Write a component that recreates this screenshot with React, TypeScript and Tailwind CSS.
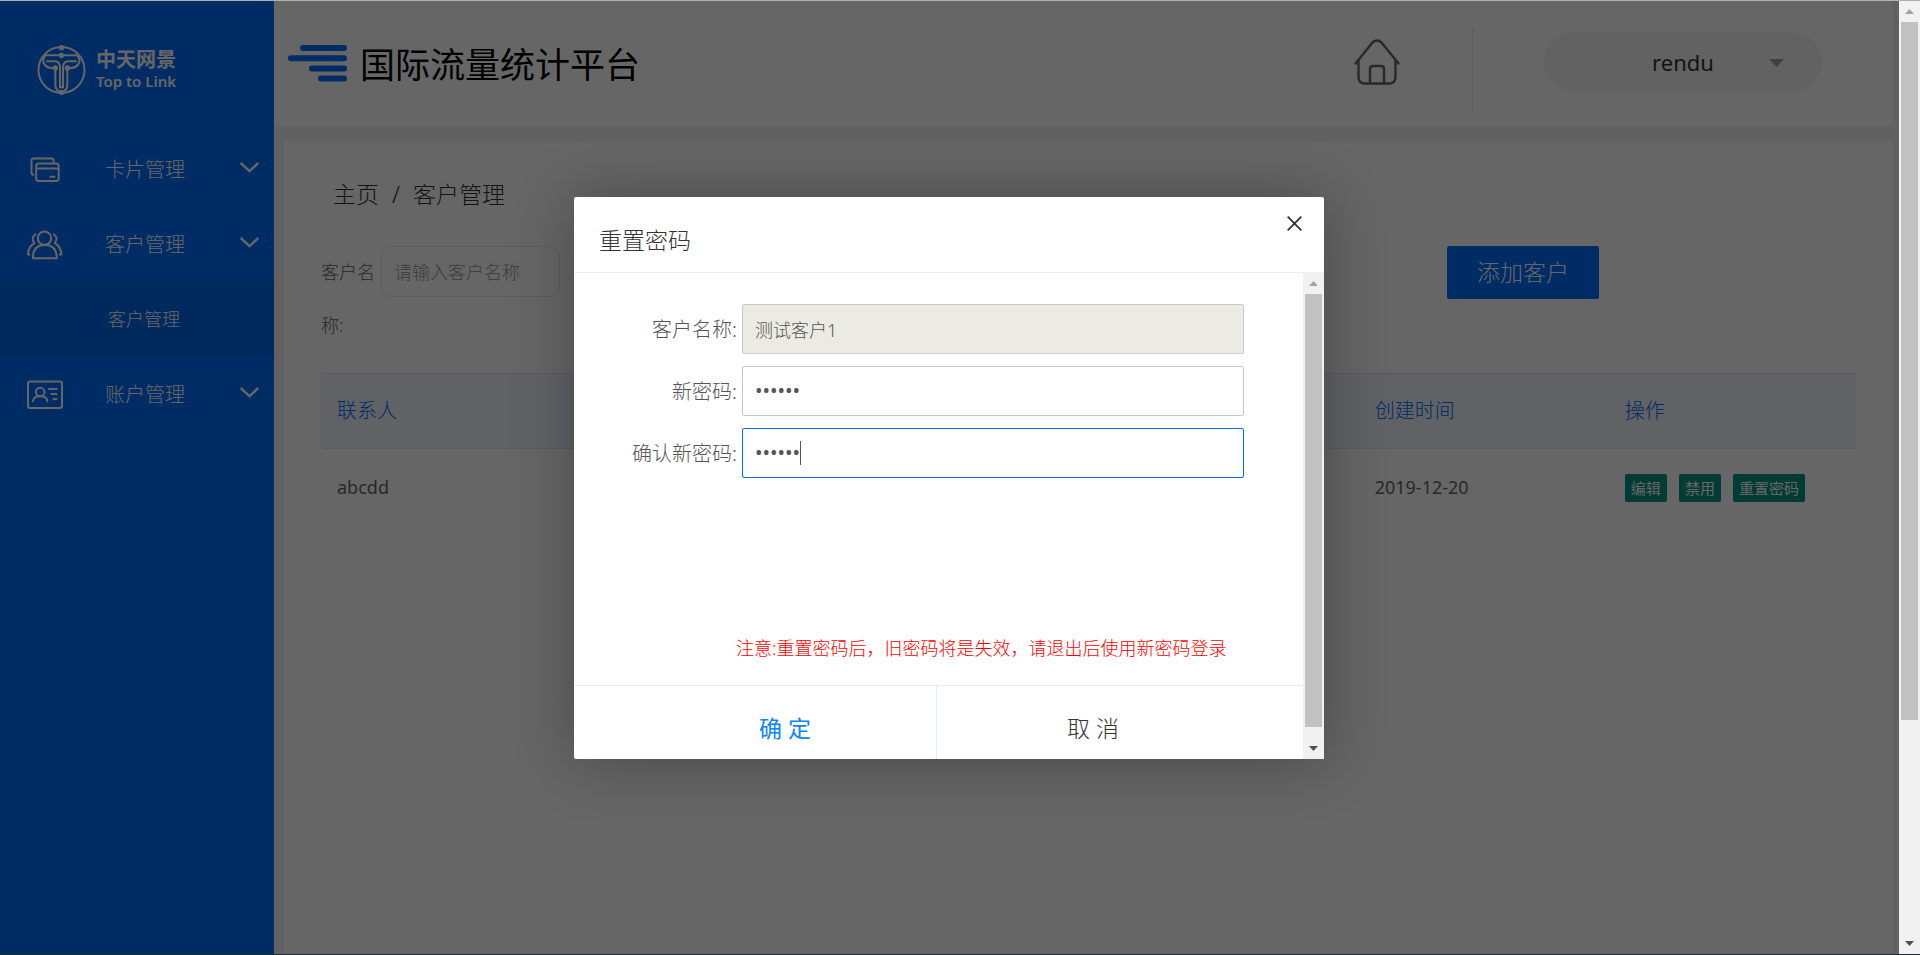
import { useState } from "react"

const menuData = [
    {name:"卡片管理", icon:"cards", children:[]},
    {name:"客户管理", icon:"users", children:["客户管理"]},
    {name:"账户管理", icon:"account", children:[]},
]

const customersData = [
    {contact:"abcdd", created:"2019-12-20"},
]

const actions = ["编辑", "禁用", "重置密码"]

export default function App() {
    return (
        <div className="h-screen flex overflow-hidden border-t border-t-[#b0b0b0] border-b border-b-[#1d3038] font-['Noto_Sans','Noto_Sans_CJK_SC',sans-serif] font-light">
            <div className="relative flex-1 flex min-w-0 bg-[#f2f2f2]">
                <Sidebar />
                <div className="flex-1 min-w-0 flex flex-col pr-[6px]">
                    <Header />
                    <Customers />
                </div>
                <div className="absolute inset-0 pr-px bg-black/60 flex items-center justify-center">
                    <ResetDialog />
                </div>
            </div>
            <Scrollbar thumb="h-[76.6%]" />
        </div>
    )
}

const Sidebar = () => {
    return (
        <aside className="w-[274px] shrink-0 bg-[#006eff] text-white">
            <div className="h-[131px] pl-[37px] pt-[6px] flex items-center gap-[10px]">
                <Logo />
                <div className="font-bold">
                    <p className="text-[20px] leading-[22px]">中天网景</p>
                    <p className="text-[15px] leading-[20px] font-semibold">Top to Link</p>
                </div>
            </div>
            <ul>
                {menuData.map(v => <MenuItem key={v.name} Obj={v} />)}
            </ul>
        </aside>
    )
}

const MenuItem = (props:any) => {
    return (
        <li>
            <button className="w-full h-[75px] pl-[27px] pr-[15px] pt-px flex items-center text-[20px]">
                <MenuIcon name={props.Obj.icon} />
                <span className="ml-[42px]">{props.Obj.name}</span>
                <svg className="ml-auto mb-1.5" width="19" height="11" viewBox="0 0 19 11" fill="none" stroke="currentColor" strokeWidth="2.400"><path d="M0.700 1l8.800 8.200L18.300 1" /></svg>
            </button>
            {props.Obj.children.map((c:string) => (
                <a key={c} href="#" className="block h-[75px] pl-[108px] bg-[#0067ec] text-[18px] leading-[75px]">{c}</a>
            ))}
        </li>
    )
}

const Header = () => {
    return (
        <header className="h-[125px] pl-[14px] pr-[71px] flex items-center bg-white">
            <svg width="59" height="37" viewBox="0 0 59 37" stroke="#006eff" strokeWidth="6" strokeLinecap="round">
                <path d="M15 3h41M3 13.300h53M24 23.500h32M33 33.500h23" />
            </svg>
            <h1 className="ml-[13px] pt-1 text-[35px] text-black font-normal">国际流量统计平台</h1>
            <div className="ml-auto self-stretch pb-[3px] flex items-center">
                <a href="#" aria-label="主页" className="mr-[72px]">
                    <svg width="46" height="46" viewBox="0 0 46 46" fill="none" stroke="#666" strokeWidth="2.400" strokeLinecap="round" strokeLinejoin="round">
                        <path d="M1.500 24.500L18.500 3.500q4.500-4 9 0L44.500 24.500" />
                        <path d="M4.500 22V38q0 6.500 6.500 6.500h24Q41.500 44.500 41.500 38V22" />
                        <path d="M16 44V30q0-3 3-3h8q3 0 3 3v14" />
                    </svg>
                </a>
                <div className="w-px h-[89px] self-end mb-[8px] bg-[#eaeaea]"></div>
                <button className="relative ml-[71px] w-[278px] h-[60px] rounded-full bg-[#f5f5f5] text-[22px] text-[#333] font-normal">
                    rendu
                    <svg className="absolute right-[38px] top-[27px]" width="15" height="8" viewBox="0 0 15 8" fill="#a3a3a3"><path d="M0 0h15L7.500 8z" /></svg>
                </button>
            </div>
        </header>
    )
}

const Customers = () => {
    return (
        <main className="flex-1 mt-[15px] ml-[10px] pt-[37px] pl-[37px] pr-[37px] bg-white text-[#666]">
            <nav className="pl-[12px] flex gap-[13px] text-[23px] leading-[33px] text-[#333]">
                <a href="#">主页</a>
                <span>/</span>
                <a href="#">客户管理</a>
            </nav>
            <div className="mt-[35px] flex items-start">
                <label htmlFor="customer" className="w-[60px] text-[18px] leading-[53px]">客户名称:</label>
                <input id="customer" placeholder="请输入客户名称" className="w-[179px] h-[51px] px-[12px] border border-[#e6e6e6] rounded-[10px] text-[18px] placeholder:text-[#999]" />
                <button className="ml-auto mr-[257px] w-[152px] h-[53px] rounded-[2px] bg-[#006eff] text-white text-[23px]">添加客户</button>
            </div>
            <table className="w-full mt-[21px] table-fixed text-left">
                <thead>
                    <tr className="h-[75px] bg-[#f0f5fc] border-y border-[#e2e6ec] text-[20px] text-[#006eff]">
                        <th className="w-[67.6%] px-[16px] font-light">联系人</th>
                        <th className="w-[16.3%] px-[16px] font-light">创建时间</th>
                        <th className="px-[16px] font-light">操作</th>
                    </tr>
                </thead>
                <tbody>
                    {customersData.map(v => (
                        <tr key={v.contact} className="h-[78px] text-[18px]">
                            <td className="px-[16px] font-normal">{v.contact}</td>
                            <td className="px-[16px] font-normal">{v.created}</td>
                            <td className="px-[16px]">
                                <div className="flex gap-[12px]">
                                    {actions.map(a => <button key={a} className="h-[28px] px-[6px] rounded-[2px] bg-[#009688] text-white text-[15px] font-normal whitespace-nowrap">{a}</button>)}
                                </div>
                            </td>
                        </tr>
                    ))}
                </tbody>
            </table>
        </main>
    )
}

const ResetDialog = () => {
    const [password, setPassword] = useState("123456")
    const [confirm, setConfirm] = useState("123456")
    return (
        <div role="dialog" aria-labelledby="dialog-title" className="w-[750px] bg-white rounded-[2px] shadow-[1px_1px_62px_rgba(0,0,0,0.3)]">
            <div className="h-[76px] pl-[25px] pr-[22px] flex justify-between border-b border-[#eee]">
                <h2 id="dialog-title" className="pt-[13px] self-center text-[23px] text-[#333]">重置密码</h2>
                <button aria-label="关闭" className="mt-[19px] w-[15px] h-[15px]">
                    <svg width="15" height="15" viewBox="0 0 15 15" stroke="#2d2c3b" strokeWidth="1.700"><path d="M0.700 0.700l13.600 13.600M14.300 0.700L0.700 14.300" /></svg>
                </button>
            </div>
            <div className="h-[486px] flex">
                <form className="flex-1 flex flex-col text-[#555]">
                    <div className="pt-[31px] pr-[59px] flex flex-col gap-[12px]">
                        <Field id="name" label="客户名称:" value="测试客户1" disabled />
                        <Field id="password" label="新密码:" type="password" value={password} onChange={setPassword} />
                        <Field id="confirm" label="确认新密码:" type="password" value={confirm} onChange={setConfirm} autoFocus />
                    </div>
                    <p className="mt-auto mb-[23px] pl-[162px] text-[18px] leading-[28px] text-[#f00] whitespace-nowrap">注意:重置密码后，旧密码将是失效，请退出后使用新密码登录</p>
                    <div className="h-[74px] flex border-t border-[#e1ebf9] text-[23px]">
                        <button type="button" className="w-[363px] pl-[60px] pt-[12px] border-r border-[#e1ebf9] text-[#0a84ff] font-normal">确 定</button>
                        <button type="button" className="flex-1 pr-[54px] pt-[12px] text-[#333]">取 消</button>
                    </div>
                </form>
                <Scrollbar thumb="h-[97.6%]" />
            </div>
        </div>
    )
}

const Field = (props:any) => {
    const [focused, setFocused] = useState(false)
    const isPassword = props.type === "password"
    return (
        <div className="flex items-center">
            <label htmlFor={props.id} className="w-[168px] pr-[5px] pt-[2px] text-right text-[20px]">{props.label}</label>
            <div className="relative flex-1">
                <input
                    id={props.id}
                    type={props.type || "text"}
                    value={props.value}
                    disabled={props.disabled}
                    autoFocus={props.autoFocus}
                    onFocus={() => setFocused(true)}
                    onBlur={() => setFocused(false)}
                    onChange={e => props.onChange(e.target.value)}
                    className={"block w-full h-[50px] px-[12px] border border-[#c9c9c9] rounded-[2px] outline-none caret-transparent focus:border-[#006eff] disabled:bg-[#ebebe4] " + (isPassword ? "text-[20px] font-normal" : "text-[18px]")}
                />
                {focused && isPassword && <span className="absolute top-[13px] w-px h-[24px] bg-[#555]" style={{left:Math.round(13 + props.value.length * 7.5)}}></span>}
            </div>
        </div>
    )
}

const Scrollbar = (props:any) => {
    return (
        <div aria-hidden="true" className="w-[21px] shrink-0 flex flex-col bg-[#f1f1f1]">
            <div className="h-[21px] flex items-center justify-center"><svg width="9" height="5" viewBox="0 0 9 5" fill="#a3a3a3"><path d="M0 5h9L4.500 0z" /></svg></div>
            <div className="flex-1 px-[2px]"><div className={"bg-[#c1c1c1] " + props.thumb}></div></div>
            <div className="h-[21px] flex items-center justify-center"><svg width="9" height="5" viewBox="0 0 9 5" fill="#505050"><path d="M0 0h9L4.500 5z" /></svg></div>
        </div>
    )
}

const Logo = () => {
    return (
        <svg width="49" height="50" viewBox="113 135 147 150" fill="none" stroke="currentColor" strokeWidth="6" strokeLinecap="round">
            <circle cx="186.500" cy="210" r="69" />
            <path d="M138 166h96" />
            <path d="M138 166q-12 16-2 28 6 9 20 10h12v52q0 12 10 18" />
            <path d="M234 166q12 16 2 28-6 9-20 10h-12v52q0 12-10 18" />
            <path d="M143 184h22q14 0 17 14v64M230 184h-22q-14 0-17 14v64" />
            <path d="M182 262h9" />
            <g fill="currentColor" stroke="none">
                <circle cx="186.500" cy="143" r="8" />
                <circle cx="186.500" cy="166" r="8" />
                <circle cx="168" cy="204" r="8" />
                <circle cx="204" cy="204" r="8" />
                <circle cx="186.500" cy="277" r="8" />
            </g>
        </svg>
    )
}

const MenuIcon = (props:any) => {
    return (
        <svg width="36" height="30" viewBox="0 0 36 30" fill="none" stroke="currentColor" strokeWidth="2" strokeLinecap="round" strokeLinejoin="round">
            {props.name === "cards" && <>
                <path d="M26.500 6.500V5q0-1.500-1.500-1.500H6.500Q4.500 3.500 4.500 5.500v12.500q0 1.800 2 1.800" />
                <rect x="9.200" y="8.500" width="22.500" height="17.500" rx="2.500" />
                <path d="M9.500 13.500h22M23.500 21.800h4" />
            </>}
            {props.name === "users" && <>
                <circle cx="17.500" cy="8.300" r="6.700" />
                <path d="M5.800 28.300h24q0-13-12-13.500-12 .5-12 13.500z" />
                <path d="M8.500 4.300Q3.500 8 7.500 13.200 1 17 1 24.500h1.500M26.800 4.300q5 3.700 1 8.900 6.500 3.800 6.500 11.300h-1.500" />
            </>}
            {props.name === "account" && <>
                <rect x="1" y="1.500" width="34" height="26.500" rx="2" />
                <circle cx="13.200" cy="12" r="4.300" />
                <path d="M6 21.300q.5-5 7.200-5t7.200 5M22 9h7.500M24.500 14h5M26.500 19h3" />
            </>}
        </svg>
    )
}
